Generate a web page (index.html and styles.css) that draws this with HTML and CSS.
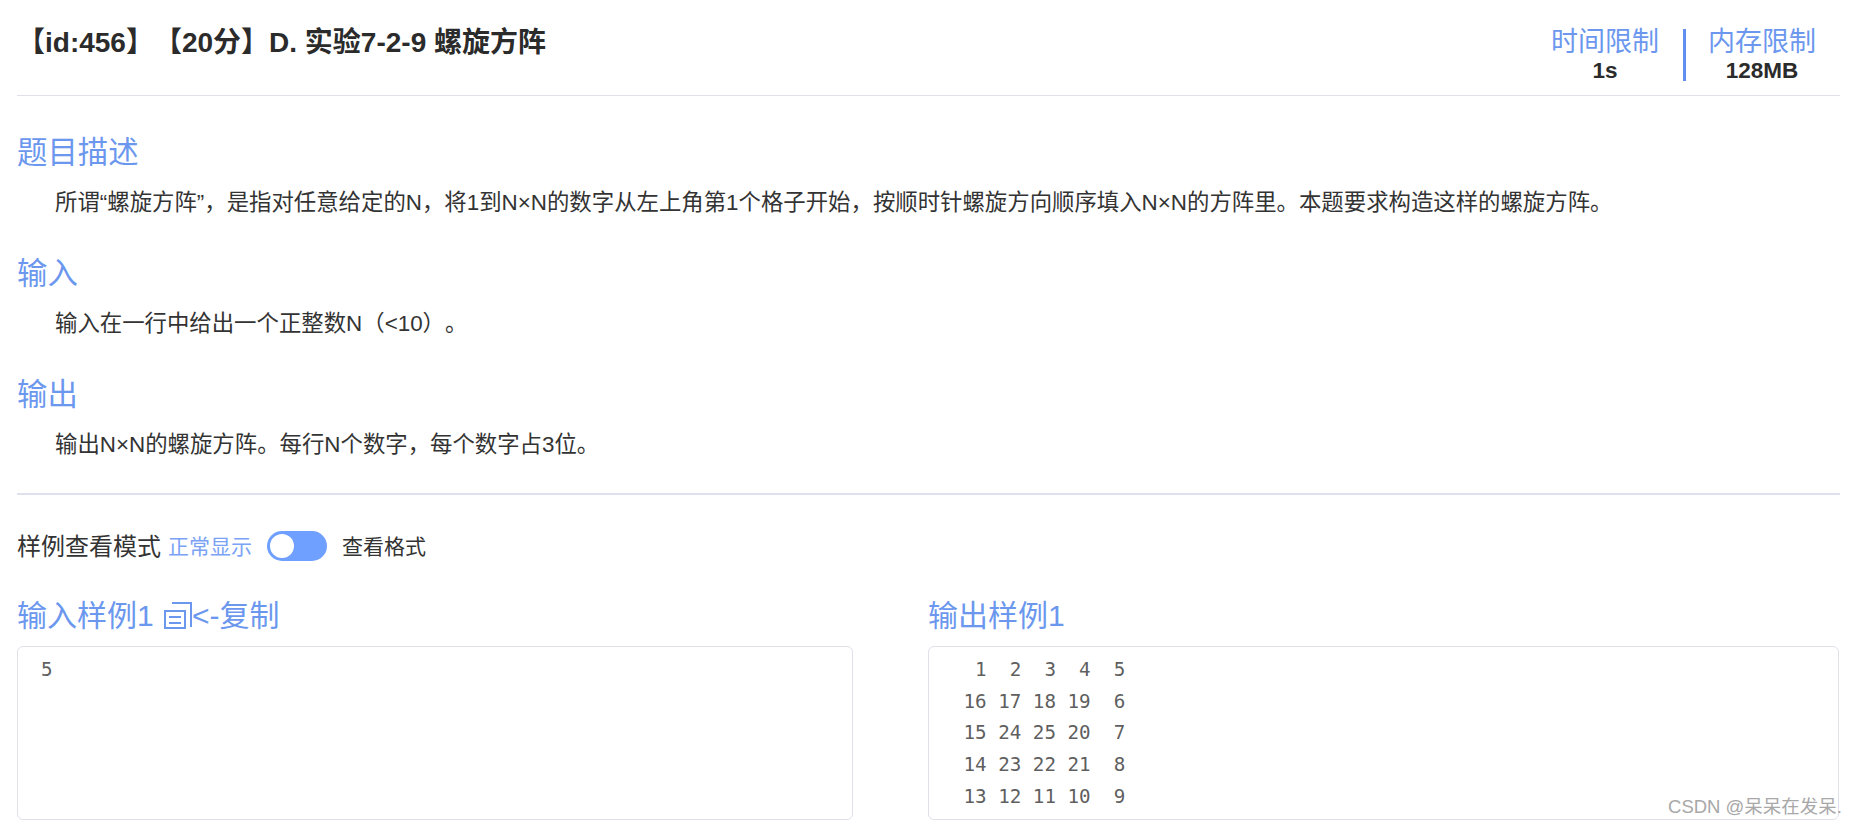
FILE: index.html
```html
<!DOCTYPE html>
<html lang="zh-CN">
<head>
<meta charset="utf-8">
<title>螺旋方阵</title>
<link rel="stylesheet" href="styles.css">
</head>
<body>
<main class="page">
  <header class="top">
    <h1 class="title">【id:456】【20分】D. 实验7-2-9 螺旋方阵</h1>
    <div class="limits">
      <div class="limit"><span class="limit-label">时间限制</span><strong class="limit-value">1s</strong></div>
      <div class="limit-sep"></div>
      <div class="limit"><span class="limit-label">内存限制</span><strong class="limit-value">128MB</strong></div>
    </div>
  </header>
  <section class="desc">
    <h2 class="sec-title">题目描述</h2>
    <p class="sec-text">所谓“螺旋方阵”，是指对任意给定的N，将1到N×N的数字从左上角第1个格子开始，按顺时针螺旋方向顺序填入N×N的方阵里。本题要求构造这样的螺旋方阵。</p>
    <h2 class="sec-title">输入</h2>
    <p class="sec-text">输入在一行中给出一个正整数N（&lt;10）。</p>
    <h2 class="sec-title">输出</h2>
    <p class="sec-text">输出N×N的螺旋方阵。每行N个数字，每个数字占3位。</p>
  </section>
  <div class="mode">
    <span class="mode-name">样例查看模式</span>
    <span class="mode-on">正常显示</span>
    <span class="switch"><span class="knob"></span></span>
    <span class="mode-off">查看格式</span>
  </div>
  <div class="samples">
    <div class="sample">
      <h2 class="sample-title">输入样例1 <svg class="copy" viewBox="0 0 28 27" width="28" height="27"><path d="M8 1h19v24M1 9h20v17H1zM5 15h12M5 21h12" fill="none" stroke="currentColor" stroke-width="2"/></svg>&lt;-复制</h2>
      <pre class="code">5</pre>
    </div>
    <div class="sample">
      <h2 class="sample-title">输出样例1</h2>
      <pre class="code">  1  2  3  4  5
 16 17 18 19  6
 15 24 25 20  7
 14 23 22 21  8
 13 12 11 10  9</pre>
    </div>
  </div>
</main>
<div class="watermark">CSDN @呆呆在发呆.</div>
</body>
</html>
```
FILE: styles.css
```css
* { box-sizing: border-box; }
html, body { margin: 0; height: 828px; overflow: hidden; background: #fff; }
body {
  font-family: "Liberation Sans", "Noto Sans CJK SC", sans-serif;
  color: #333;
  position: relative;
  text-spacing-trim: space-all;
}
.page { padding: 0 20px 0 17px; }
.top {
  display: flex;
  justify-content: space-between;
  align-items: flex-start;
  height: 96px;
  border-bottom: 1px solid #e0e0ea;
}
.title { margin: 24px 0 0; font-size: 28px; line-height: 38px; font-weight: 700; color: #2b2b2b; }
.limits { display: flex; padding: 26px 24px 0 0; }
.limit { display: flex; flex-direction: column; align-items: center; width: 108px; }
.limit-label { padding-top: 1px; font-size: 27px; line-height: 31px; color: #6b97ee; }
.limit-value { font-size: 22.5px; line-height: 25px; color: #2b2b2b; }
.limit-sep { width: 3px; height: 52px; margin: 3px 22px 0 24px; background: #5f8fef; }
.desc { padding-top: 36px; height: 399px; border-bottom: 2px solid #dfe0ee; }
.sec-title { margin: 0; font-size: 30.4px; line-height: 40px; font-weight: 400; color: #6b97ee; }
.sec-text { margin: 16px 0 35px; padding-left: 38px; font-size: 22.4px; line-height: 30px; color: #333; }
.mode { display: flex; align-items: center; height: 30px; margin-top: 36px; }
.mode-name { padding-bottom: 4px; font-size: 24px; color: #333; }
.mode-on { margin-left: 7px; padding-bottom: 2px; font-size: 21px; color: #7ba3f5; }
.switch {
  display: flex;
  align-items: center;
  width: 60px;
  height: 30px;
  margin: 0 15px;
  padding-left: 3px;
  border-radius: 15px;
  background: #6f9fff;
}
.knob { width: 24px; height: 24px; border-radius: 50%; background: #fff; }
.mode-off { padding-bottom: 2px; font-size: 21px; color: #333; }
.samples { display: grid; grid-template-columns: 836px 911px; gap: 75px; margin-top: 32px; }
.sample-title { margin: 0 0 7px; font-size: 30px; line-height: 46px; font-weight: 400; color: #6b97ee; }
.copy { vertical-align: -3px; margin: 0 0 0 2px; }
.code {
  height: 174px;
  margin: 0;
  padding: 7px 23px;
  border: 1px solid #e0e0ea;
  border-radius: 6px;
  font-family: "DejaVu Sans Mono", monospace;
  font-size: 19.2px;
  line-height: 31.7px;
  color: #5f5f5f;
}
.watermark {
  position: absolute;
  right: 18px;
  bottom: 9px;
  font-size: 18.5px;
  line-height: 24px;
  color: #a8a8a8;
}
```
